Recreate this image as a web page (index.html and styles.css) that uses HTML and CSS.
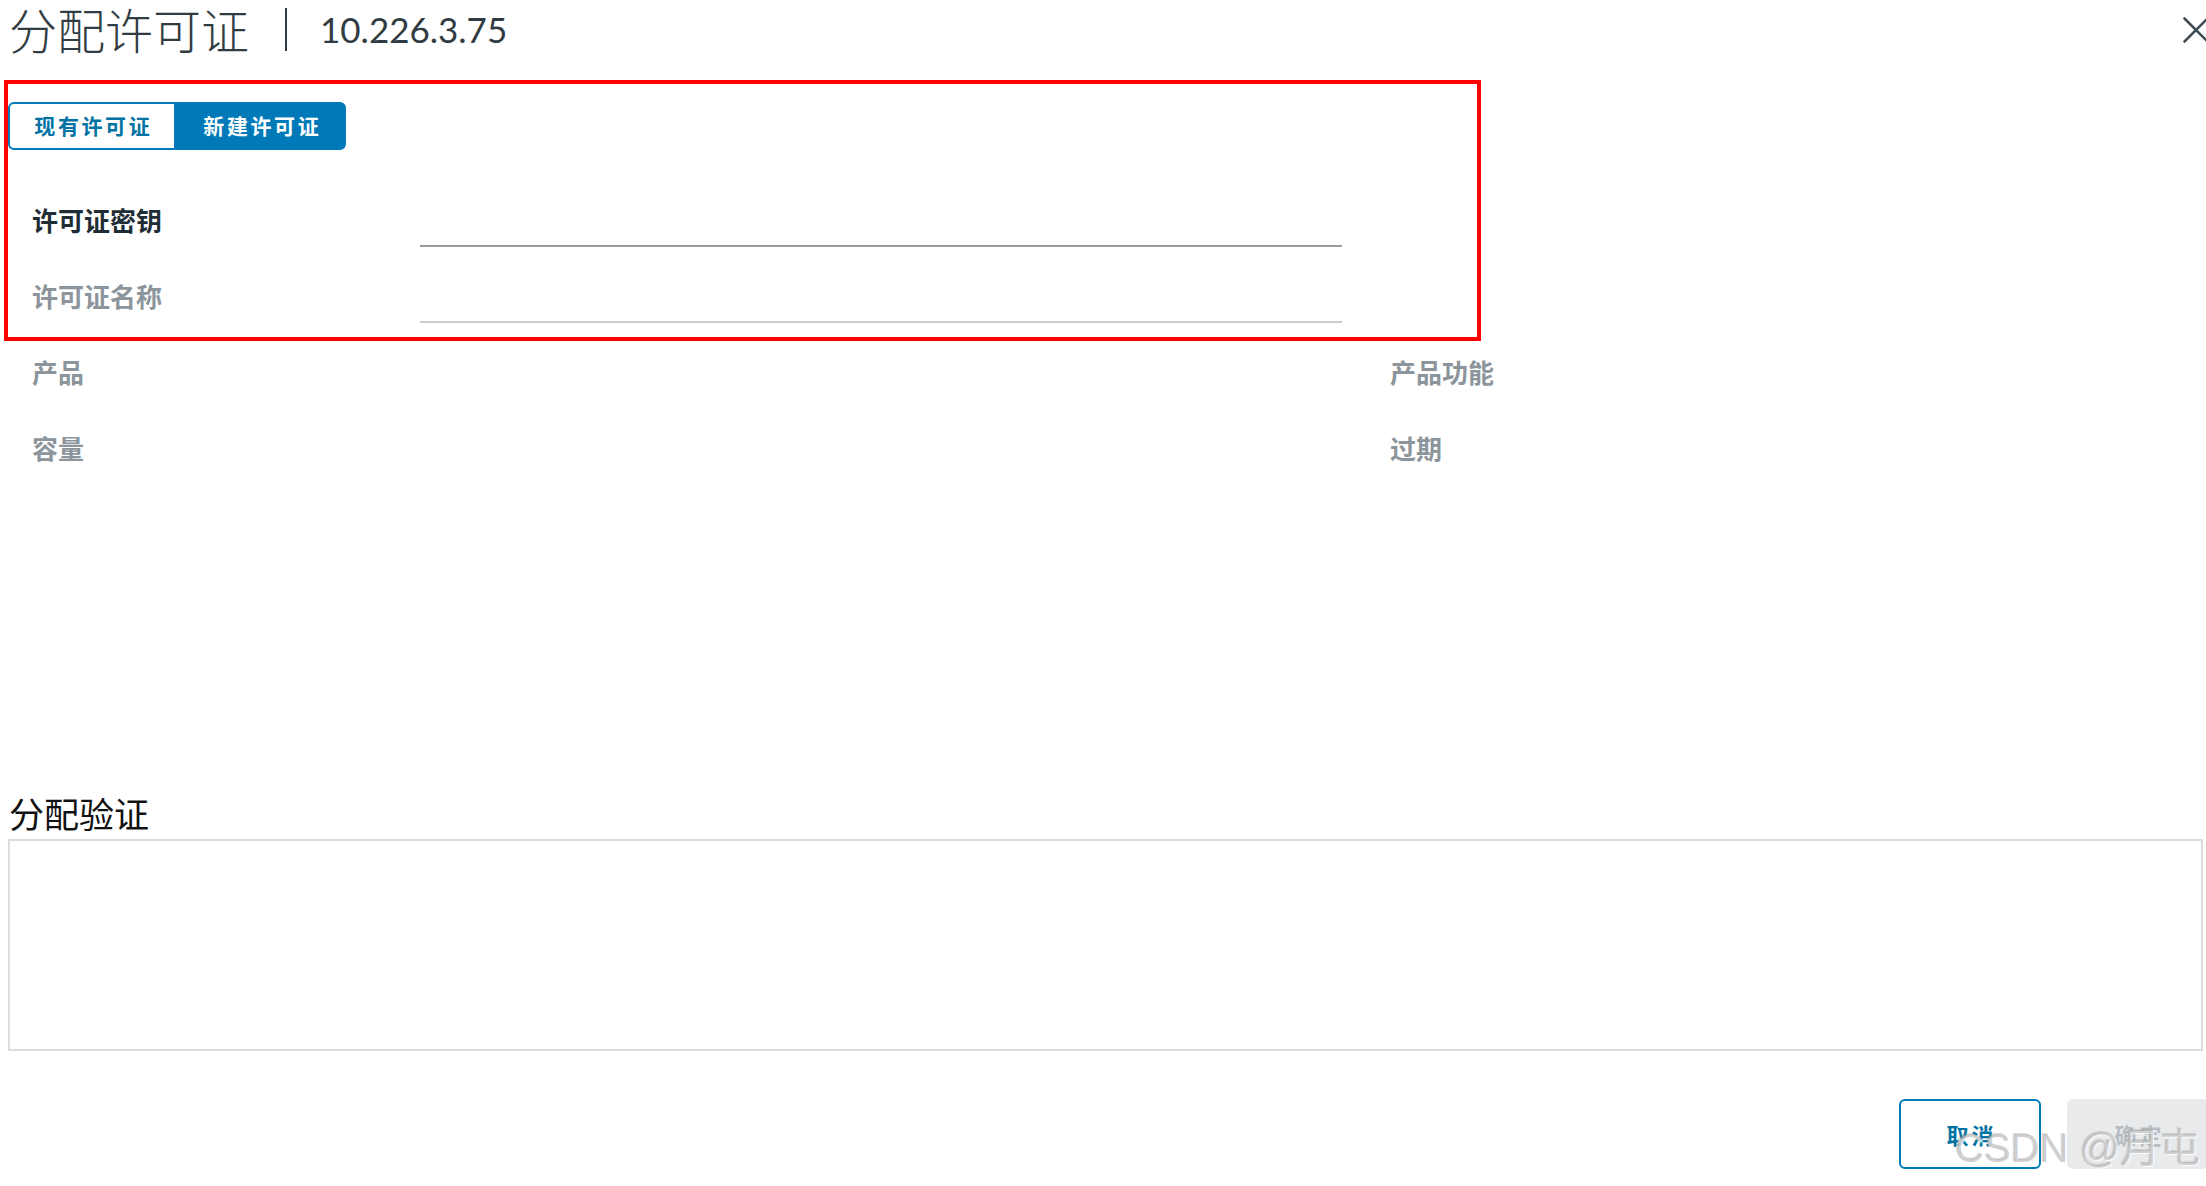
FILE: index.html
```html
<!DOCTYPE html>
<html lang="zh-CN">
<head>
<meta charset="utf-8">
<title>分配许可证</title>
<link rel="stylesheet" href="styles.css">
</head>
<body>
<div class="modal">
  <header class="modal-header">
    <h1 class="modal-title">分配许可证</h1>
    <span class="title-sep"></span>
    <span class="title-host">10.226.3.75</span>
    <button class="close-btn" aria-label="关闭">
      <svg width="26" height="26" viewBox="0 0 26 26"><path d="M1.5 1.5 L24.5 24.5 M24.5 1.5 L1.5 24.5" stroke="#3e4d56" stroke-width="2.6" stroke-linecap="round" fill="none"/></svg>
    </button>
  </header>

  <div class="toggle-group">
    <button class="toggle-btn">现有许可证</button>
    <button class="toggle-btn active">新建许可证</button>
  </div>

  <div class="field-row">
    <label class="field-label strong">许可证密钥</label>
    <input class="field-input dark" type="text">
  </div>
  <div class="field-row">
    <label class="field-label">许可证名称</label>
    <input class="field-input light" type="text">
  </div>

  <div class="info-row">
    <span class="field-label">产品</span>
    <span class="field-label">产品功能</span>
  </div>
  <div class="info-row">
    <span class="field-label">容量</span>
    <span class="field-label">过期</span>
  </div>

  <h2 class="section-title">分配验证</h2>
  <textarea class="validation-box" readonly></textarea>

  <footer class="modal-footer">
    <button class="btn btn-outline">取消</button>
    <button class="btn btn-disabled">确定</button>
  </footer>

  <div class="highlight"></div>
  <div class="watermark">CSDN @月屯</div>
</div>
</body>
</html>
```

FILE: styles.css
```css
html, body {
  margin: 0;
  padding: 0;
  background: #ffffff;
}
body {
  width: 2206px;
  height: 1186px;
  overflow: hidden;
  font-family: "Noto Sans CJK SC", "Noto Sans", sans-serif;
  color: #22343c;
}
.modal {
  position: relative;
  width: 2206px;
  height: 1186px;
}
.modal-header {
  display: flex;
  align-items: center;
  height: 56px;
}
.modal-title {
  margin: 0 0 0 9px;
  font-size: 48px;
  line-height: 56px;
  font-weight: 300;
  color: #313c42;
}
.title-sep {
  width: 2px;
  height: 43px;
  background: #313c42;
  margin: 2px 33px 0 36px;
}
.title-host {
  font-family: "Lato", "Liberation Sans", sans-serif;
  font-size: 35px;
  color: #313c42;
  margin-top: 2px;
}
.close-btn {
  margin-left: auto;
  margin-right: -3px;
  align-self: flex-start;
  margin-top: 17px;
  padding: 0;
  border: 0;
  background: none;
  width: 26px;
  height: 26px;
  display: block;
}
.close-btn svg { display: block; }

.toggle-group {
  display: flex;
  margin: 46px 0 0 8px;
  height: 48px;
}
.toggle-btn {
  box-sizing: border-box;
  height: 48px;
  width: 168px;
  border: 2px solid #0079b8;
  background: #ffffff;
  color: #0072a3;
  font-family: "Noto Sans CJK SC", sans-serif;
  font-size: 21px;
  line-height: 1;
  font-weight: 700;
  letter-spacing: 2.6px;
  padding: 0 0 2px 2.6px;
  border-radius: 6px 0 0 6px;
}
.toggle-btn.active {
  width: 170px;
  background: #0079b8;
  color: #ffffff;
  border-radius: 0 6px 6px 0;
}

.field-row {
  display: grid;
  grid-template-columns: 388px 922px;
  align-items: center;
  height: 76px;
  padding-left: 32px;
}
.toggle-group + .field-row { margin-top: 32px; }
.field-label {
  font-size: 26px;
  line-height: 36px;
  font-weight: 700;
  color: #8c959b;
}
.field-label.strong {
  color: #1f2e36;
}
.field-input {
  align-self: end;
  margin-bottom: 11px;
  box-sizing: border-box;
  height: 50px;
  width: 922px;
  border: 0;
  border-bottom: 2px solid #9b9b9b;
  outline: none;
  background: transparent;
  font-size: 24px;
  padding: 0;
}
.field-input.light { border-bottom-color: #cccccc; }

.info-row {
  display: grid;
  grid-template-columns: 1358px 1fr;
  align-items: center;
  height: 76px;
  padding-left: 32px;
}

.section-title {
  margin: 306px 0 5px 9px;
  font-size: 35px;
  line-height: 42px;
  font-weight: 400;
  color: #111111;
}
.validation-box {
  display: block;
  box-sizing: border-box;
  margin-left: 8px;
  width: 2195px;
  height: 212px;
  border: 2px solid #dddddd;
  resize: none;
  outline: none;
  padding: 0;
  background: #ffffff;
}

.modal-footer {
  display: flex;
  justify-content: flex-end;
  gap: 26px;
  margin-top: 48px;
  margin-right: -3px;
}
.btn {
  box-sizing: border-box;
  width: 142px;
  height: 70px;
  border-radius: 6px;
  font-family: "Noto Sans CJK SC", sans-serif;
  font-size: 22px;
  font-weight: 700;
  letter-spacing: 3px;
  padding: 0 0 0 3px;
}
.btn-outline {
  border: 2px solid #0079b8;
  background: #ffffff;
  color: #0072a3;
}
.btn-disabled {
  border: 0;
  background: #e9eaec;
  color: #b6bdc2;
}

.highlight {
  position: absolute;
  left: 4px;
  top: 80px;
  width: 1477px;
  height: 261px;
  box-sizing: border-box;
  border: 4px solid #ff0000;
  pointer-events: none;
}
.watermark {
  position: absolute;
  left: 1955px;
  top: 1122px;
  font-family: "Liberation Sans", "Noto Sans CJK SC", sans-serif;
  font-size: 40px;
  line-height: 52px;
  color: rgba(170, 170, 170, 0.55);
  text-shadow: 1px 1px 1px rgba(255, 255, 255, 0.9), -1px -1px 1px rgba(120, 120, 120, 0.25);
  white-space: nowrap;
  pointer-events: none;
}
```
